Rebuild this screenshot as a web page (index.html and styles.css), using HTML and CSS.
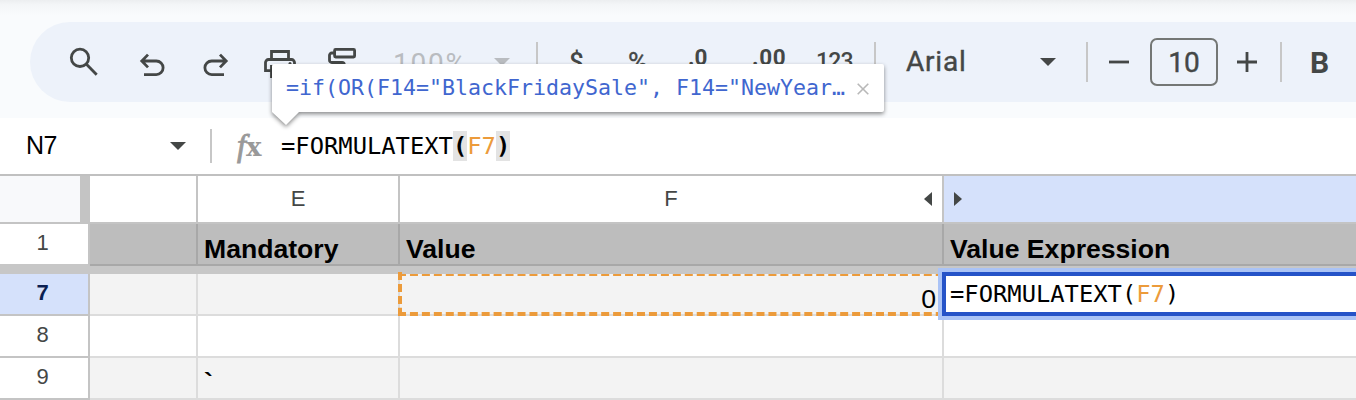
FILE: index.html
```html
<!DOCTYPE html>
<html lang="en">
<head>
<meta charset="utf-8">
<title>Spreadsheet</title>
<link rel="stylesheet" href="styles.css">
</head>
<body>
<div class="app">
  <header class="top">
    <div class="toolbar">
      <svg class="icon search" width="30" height="34" viewBox="69 45 30 34"><circle cx="80" cy="57.8" r="8.7"/><path d="M86.2 64 96.7 74.8"/></svg>
      <svg class="icon undo" width="26" height="34" viewBox="139 45 26 34"><path d="M148 54.6 141.8 61l6.2 6.4M142 61h14.3a6.7 6.7 0 0 1 0 13.6H144"/></svg>
      <svg class="icon redo" width="26" height="34" viewBox="203 45 26 34"><path d="M220 54.6 226.200 61l-6.200 6.400M226 61h-14.300a6.700 6.700 0 0 0 0 13.600H224"/></svg>
      <svg class="icon print" width="34" height="34" viewBox="263 45 34 34"><path d="M271.500 59V51.500h17V59M271.500 70.600h-6V62.500a3 3 0 0 1 3-3h23a3 3 0 0 1 3 3v8.100h-6M271.500 66.500h17v10h-17z"/><circle class="dot" cx="290" cy="63.500" r="1.500"/></svg>
      <svg class="icon paint" width="30" height="34" viewBox="327 45 30 34"><rect x="334.600" y="49.400" width="20" height="7.600" rx="1"/><path d="M334.500 53h-2.700a2.300 2.300 0 0 0-2.300 2.300v4.900a2.300 2.300 0 0 0 2.300 2.300H342a2.300 2.300 0 0 1 2.300 2.300V68"/></svg>
      <span class="label zoom">100%</span>
      <svg class="caret caret-zoom" width="16" height="8" viewBox="0 0 16 8"><path d="M0 0h16L8 8z"/></svg>
      <i class="sep sep-a"></i>
      <span class="label dollar">$</span>
      <span class="label percent">%</span>
      <span class="label dec-less">.0</span>
      <span class="label dec-more">.00</span>
      <span class="label formats">123</span>
      <i class="sep sep-b"></i>
      <span class="label font-name">Arial</span>
      <svg class="caret caret-font" width="16" height="8" viewBox="0 0 16 8"><path d="M0 0h16L8 8z"/></svg>
      <i class="sep sep-c"></i>
      <svg class="icon minus" width="20" height="20" viewBox="0 0 20 20"><path d="M0 10h20"/></svg>
      <span class="label size-box">10</span>
      <svg class="icon plus" width="20" height="20" viewBox="0 0 20 20"><path d="M0 10h20M10 0v20"/></svg>
      <i class="sep sep-d"></i>
      <span class="label bold">B</span>
    </div>
  </header>

  <div class="formula-bar">
    <span class="name-box">N7</span>
    <svg class="caret caret-name" width="16" height="8" viewBox="0 0 16 8"><path d="M0 0h16L8 8z"/></svg>
    <i class="name-sep"></i>
    <span class="fx"><em>f</em><b>x</b></span>
    <span class="formula code">=FORMULATEXT<b class="paren">(</b><span class="ref">F7</span><b class="paren">)</b></span>
  </div>

  <div class="sheet">
    <div class="row heads">
      <div class="corner"></div>
      <div class="head"></div>
      <div class="head">E</div>
      <div class="head head-f">F
        <svg class="tri tri-left" width="8" height="14" viewBox="0 0 8 14"><path d="M8 0v14L0 7z"/></svg>
      </div>
      <div class="head selected"><svg class="tri" width="8" height="14" viewBox="0 0 8 14"><path d="M0 0v14l8-7z"/></svg></div>
    </div>
    <div class="row titles">
      <div class="num">1</div>
      <div class="cell"></div>
      <div class="cell">Mandatory</div>
      <div class="cell">Value</div>
      <div class="cell">Value Expression</div>
    </div>
    <div class="freeze"></div>
    <div class="row shaded first">
      <div class="num active">7</div>
      <div class="cell"></div>
      <div class="cell"></div>
      <div class="cell value">0
        <svg class="marquee" width="542" height="44" viewBox="398 272 542 44"><path class="thin" d="M398 275H940"/><path d="M398 314H940"/><path d="M400 272V316"/></svg>
      </div>
      <div class="cell"><div class="editor code">=FORMULATEXT(<span class="ref">F7</span>)</div></div>
    </div>
    <div class="row">
      <div class="num">8</div>
      <div class="cell"></div><div class="cell"></div><div class="cell"></div><div class="cell"></div>
    </div>
    <div class="row shaded">
      <div class="num">9</div>
      <div class="cell"></div><div class="cell tick">`</div><div class="cell"></div><div class="cell"></div>
    </div>
  </div>

  <div class="tooltip">
    <svg class="bubble" width="632" height="84" viewBox="0 0 632 84"><path d="M4 10h608q2 0 2 2v44q0 2-2 2H29L16 71 2 58V12q0-2 2-2z"/></svg>
    <span class="code preview">=if(OR(F14="BlackFridaySale", F14="NewYear…</span>
    <svg class="close" width="12" height="12" viewBox="0 0 12 12"><path d="M.7.7l10.600 10.600M11.300.7.7 11.300"/></svg>
  </div>
</div>
</body>
</html>
```
FILE: styles.css
```css
* { box-sizing: border-box; }
body { margin: 0; background: #fff; font-family: "Liberation Sans", Arial, sans-serif; }
.app { position: relative; width: 1356px; height: 400px; overflow: hidden; }

.top {
  height: 118px;
  padding: 22px 0 16px 30px;
  background: linear-gradient(#eceef0 0, #f4f6f8 5px, #f9fbfd 16px);
}
.toolbar {
  display: flex;
  align-items: center;
  height: 80px;
  background: #edf2fa;
  border-radius: 40px 0 0 40px;
}
.toolbar > * { flex: none; }
.icon { fill: none; stroke: #444746; stroke-width: 2.8; }
.icon .dot { fill: #444746; stroke: none; }
.search { margin-left: 39px; }
.undo { margin-left: 40px; }
.redo { margin-left: 38px; }
.print { margin-left: 34px; }
.paint { margin-left: 30px; }
.minus { margin-left: 21px; }
.plus { margin-left: 19px; }

.label {
  font: 500 27px/40px Roboto, sans-serif;
  color: #444746;
  white-space: nowrap;
}
.zoom { width: 73px; margin-left: 36px; padding-top: 3px; font-weight: 400; font-size: 28px; letter-spacing: 1.8px; color: #b9bcc0; }
.dollar { width: 14px; margin-left: 31px; font-size: 26px; }
.percent { width: 22px; margin-left: 45px; font-size: 27px; font-weight: 400; padding-top: 2px; -webkit-text-stroke: 0.4px #444746; }
.dec-less { width: 20px; margin-left: 38px; }
.dec-more { width: 34px; margin-left: 44px; letter-spacing: 0.6px; }
.dec-less, .dec-more { font-size: 22.5px; font-weight: 700; padding-bottom: 11px; }
.formats { width: 38px; margin-left: 30px; font-size: 23px; letter-spacing: -0.8px; }
.font-name { width: 60px; margin-left: 30px; font-size: 28px; font-weight: 400; letter-spacing: 0.8px; -webkit-text-stroke: 0.4px #444746; }
.size-box {
  width: 68px;
  height: 48px;
  margin-left: 21px;
  border: 2px solid #747775;
  border-radius: 7px;
  font-size: 28px;
  font-weight: 400;
  line-height: 45px;
  text-align: center;
  -webkit-text-stroke: 0.4px #444746;
}
.bold { width: 18px; margin-left: 28px; padding-top: 2px; font-size: 30px; font-weight: 700; }

.caret { fill: #444746; }
.caret-zoom { margin-left: 28px; fill: #b9bcc0; }
.caret-font { margin-left: 74px; }
.sep { width: 2px; height: 40px; background: #c7c7c7; }
.sep-a { margin-left: 26px; }
.sep-b { margin-left: 20px; }
.sep-c { margin-left: 30px; }
.sep-d { margin-left: 23px; }

.code { font-family: "DejaVu Sans Mono", monospace; white-space: pre; }
.ref { color: #ec9b3b; }

.formula-bar { display: flex; align-items: center; height: 56px; padding-left: 26px; }
.name-box { width: 144px; font-size: 25px; line-height: 32px; letter-spacing: -0.5px; color: #000; padding-bottom: 2px; }
.name-sep { width: 2px; height: 34px; margin-left: 24px; background: #c7c7c7; }
.fx { width: 69px; padding: 0 0 1px 25px; font: 32px/34px "Liberation Serif", serif; color: #999; white-space: nowrap; }
.fx em { -webkit-text-stroke: 0.9px #999; }
.fx b { font-family: "DejaVu Serif", serif; font-size: 26px; }
.formula { font-size: 23.8px; line-height: 30px; color: #000; }
.paren { display: inline-block; height: 30px; background: #e3e3e3; }

.sheet { border-top: 2px solid #c0c0c0; }
.row { display: grid; grid-template: 42px / 90px 108px 202px 544px 430px; }
.row > * { border-right: 2px solid #dcdcdc; border-bottom: 2px solid #dcdcdc; }
.row.heads { grid-template-rows: 48px; }
.heads > * { border-color: #c4c4c4; }
.corner { background: linear-gradient(90deg, #f8f9fb 80px, #c4c4c4 80px); }
.head { display: flex; align-items: center; justify-content: center; font-size: 22px; color: #444746; padding-bottom: 1px; }
.head-f { position: relative; }
.head.selected { justify-content: flex-start; padding-left: 10px; background: #d5e1fb; }
.tri { fill: #444746; }
.tri-left { position: absolute; right: 10px; top: 16px; }

.row .num {
  border-color: #c4c4c4;
  padding-right: 3px;
  text-align: center;
  font-size: 22px;
  line-height: 38px;
  color: #444746;
  background: #fff;
}
.row .num.active { background: #d5e1fb; font-weight: 700; color: #0b1f52; }
.cell { padding-left: 6px; font-size: 26.6px; line-height: 50px; color: #000; min-width: 0; }
.titles .cell { background: #bdbdbd; border-color: #a8a8a8; font-weight: 700; }
.titles .num { border-bottom-color: #c7c7c7; }
.freeze { height: 8px; background: #c7c7c7; }
.shaded .cell { background: #f3f3f3; }
.row .tick { line-height: 48px; font-weight: 700; }
.value { position: relative; text-align: right; padding-right: 6px; }
.marquee { position: absolute; left: -2px; top: -2px; fill: none; stroke: #ec9b3b; stroke-width: 4; stroke-dasharray: 8 3.95; }
.marquee .thin { stroke-width: 2; }
.editor {
  position: absolute;
  left: 942px;
  top: 272px;
  width: 430px;
  height: 44px;
  padding-left: 4px;
  border: 4px solid #2553c8;
  box-shadow: 0 0 0 4px #aac3f6;
  background: #fff;
  font-size: 23.8px;
  line-height: 36px;
}

.tooltip { position: absolute; left: 270px; top: 54px; width: 632px; height: 84px; }
.bubble { position: absolute; left: 0; top: 0; fill: #fff; filter: drop-shadow(0 2px 2px rgba(0, 0, 0, 0.45)); }
.preview { position: absolute; left: 16px; top: 19px; font-size: 21.6px; line-height: 30px; color: #4066cf; }
.close { position: absolute; left: 587px; top: 29px; stroke: #b8b8b8; stroke-width: 1.6; }
```
